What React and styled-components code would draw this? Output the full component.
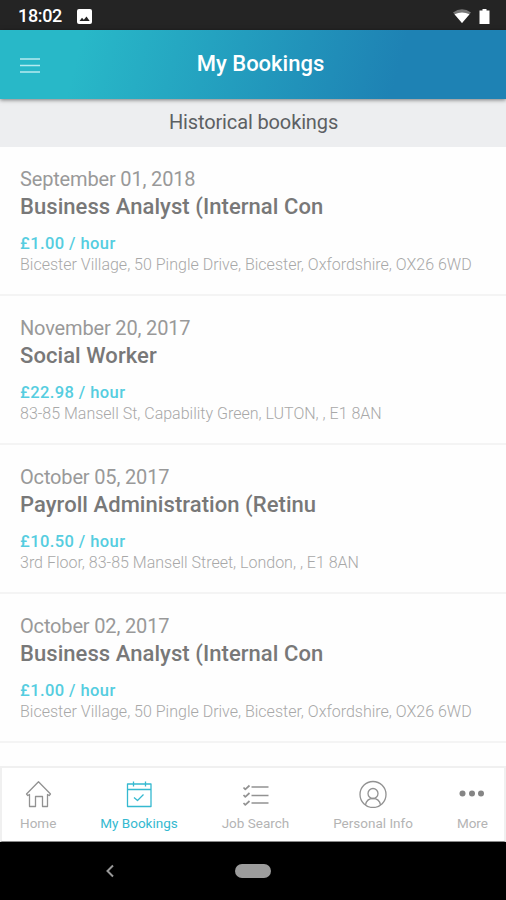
import React, { useState } from "react"
import styled, { createGlobalStyle } from "styled-components"

const GlobalStyle = createGlobalStyle`
	* {
		box-sizing: border-box;
	}
	body {
		margin: 0;
		background: #fff;
		font-family: Roboto, "Liberation Sans", sans-serif;
	}
`

const Screen = styled.div`
	display: flex;
	flex-direction: column;
	width: 100%;
	height: 900px;
	overflow: hidden;
	background: #fefefe;
`

const StatusBar = styled.div`
	display: flex;
	align-items: center;
	flex: none;
	height: 30px;
	padding: 2px 16px 0 18px;
	background: #242424;
	color: #fff;
`
const Clock = styled.span`
	flex: 1;
	display: flex;
	align-items: center;
	gap: 15px;
	font-size: 18px;
	font-weight: 500;
	line-height: 28px;
	letter-spacing: -0.35px;
`
const StatusIcons = styled.div`
	display: flex;
	align-items: center;
	gap: 7px;
`

const Header = styled.header`
	display: grid;
	grid-template-columns: 60px 1fr 40px;
	align-items: center;
	flex: none;
	height: 69px;
	padding-right: 5px;
	background: linear-gradient(105deg, #28b8c8 16%, #1e82b4 78%);
	box-shadow: 0 1px 4px rgba(0, 0, 0, 0.5);
	z-index: 1;
`
const MenuButton = styled.button`
	height: 69px;
	padding: 0 0 0 20px;
	border: 0;
	background: none;
	text-align: left;
	line-height: 0;
`
const Title = styled.h1`
	margin: 0;
	padding-bottom: 2px;
	color: #fff;
	font-size: 22px;
	font-weight: 500;
	line-height: 30px;
	text-align: center;
`

const SectionTitle = styled.h2`
	flex: none;
	height: 48px;
	margin: 0;
	padding: 8px 0 0 1px;
	background: #edeef0;
	color: #5c6063;
	font-size: 20px;
	font-weight: 400;
	line-height: 30px;
	letter-spacing: -0.13px;
	text-align: center;
`

const List = styled.ul`
	flex: 1;
	min-height: 0;
	margin: 0;
	padding: 0;
	list-style: none;
	overflow: hidden;
`
const Booking = styled.li`
	height: 149px;
	padding: 18px 20px 0;
	border-bottom: 2px solid #f4f4f4;
	white-space: nowrap;
`
const BookingDate = styled.div`
	color: #999;
	font-size: 20px;
	line-height: 28px;
	letter-spacing: -0.16px;
`
const Role = styled.div`
	color: #787878;
	font-size: 22px;
	font-weight: 500;
	line-height: 28px;
	letter-spacing: 0.06px;
`
const Rate = styled.div`
	margin-top: 12px;
	color: #55cde0;
	font-size: 16.5px;
	font-weight: 500;
	line-height: 21px;
	letter-spacing: 0.42px;
`
const Address = styled.div`
	color: #a8a8a8;
	font-size: 16px;
	font-weight: 300;
	line-height: 22px;
`

const TabBar = styled.nav`
	display: flex;
	justify-content: space-between;
	flex: none;
	height: 76px;
	padding: 0 16px 0 18px;
	border: 2px solid #f0f0f0;
	border-bottom: 1px solid #8a8a8a;
	background: #fff;
`
const Tab = styled.button`
	display: flex;
	flex-direction: column;
	align-items: center;
	padding: 12px 0 0;
	border: 0;
	background: none;
	color: ${p => (p.$active ? "#35b9d0" : "#929292")};
	font-family: inherit;
`
const TabLabel = styled.span`
	margin-top: 5px;
	color: ${p => (p.$active ? "#35b9d0" : "#b4b4b4")};
	font-size: 13.5px;
	line-height: 20px;
	white-space: nowrap;
`

const SystemBar = styled.div`
	display: grid;
	grid-template-columns: 1fr auto 1fr;
	align-items: center;
	flex: none;
	height: 58px;
	background: #000;
`
const BackButton = styled.button`
	justify-self: start;
	padding: 0;
	margin-left: 105px;
	border: 0;
	background: none;
	line-height: 0;
`
const HomePill = styled.div`
	width: 36px;
	height: 14px;
	border-radius: 7px;
	background: #9c9c9c;
`

const Icon = ({ children, stroke = 1.3, ...props }) => (
	<svg
		width="28"
		height="28"
		viewBox="0 0 28 28"
		fill="none"
		stroke="currentColor"
		strokeWidth={stroke}
		strokeLinejoin="round"
		{...props}
	>
		{children}
	</svg>
)

const HomeIcon = () => (
	<Icon>
		<path d="M2.500 14 14.500 1.800l12 12.200-1.300 1.500-1.700-1v12h-5V16.500h-7v10h-6V14.500l-1.700 1z" />
	</Icon>
)
const CalendarIcon = () => (
	<Icon>
		<path d="M2.500 4H26v22.500H2.500zM2.500 9.500H26M8.500 1.500v5M20.500 1.500v5M9 17.500l3.500 3 6-6" />
	</Icon>
)
const ChecklistIcon = () => (
	<Icon>
		<path d="M10.500 7h17M10.500 15.500h17M10.500 23h17" />
		<path
			strokeWidth="1.700"
			d="M2.500 7.500 4.300 9.300 8.500 5.500M2.500 15 4.300 16.800 8.500 13M2.500 23 4.300 24.800 8.500 21"
		/>
	</Icon>
)
const PersonIcon = () => (
	<Icon>
		<circle cx="14" cy="14.500" r="13" />
		<circle cx="14" cy="13.500" r="5" />
		<path d="M6.500 25c.7-4 3.500-6.500 7.500-6.500s6.800 2.500 7.500 6.500" />
	</Icon>
)
const MoreIcon = () => (
	<Icon fill="#858585" stroke="0">
		<circle cx="4.500" cy="13.500" r="3" />
		<circle cx="14" cy="13.500" r="3" />
		<circle cx="23" cy="13.500" r="3" />
	</Icon>
)

const bookings = [
	{
		date: "September 01, 2018",
		role: "Business Analyst (Internal Con",
		rate: "£1.00 / hour",
		address: "Bicester Village, 50 Pingle Drive, Bicester, Oxfordshire, OX26 6WD"
	},
	{
		date: "November 20, 2017",
		role: "Social Worker",
		rate: "£22.98 / hour",
		address: "83-85 Mansell St, Capability Green, LUTON, , E1 8AN"
	},
	{
		date: "October 05, 2017",
		role: "Payroll Administration (Retinu",
		rate: "£10.50 / hour",
		address: "3rd Floor, 83-85 Mansell Street, London, , E1 8AN"
	},
	{
		date: "October 02, 2017",
		role: "Business Analyst (Internal Con",
		rate: "£1.00 / hour",
		address: "Bicester Village, 50 Pingle Drive, Bicester, Oxfordshire, OX26 6WD"
	}
]

const tabs = [
	{ label: "Home", icon: HomeIcon },
	{ label: "My Bookings", icon: CalendarIcon },
	{ label: "Job Search", icon: ChecklistIcon },
	{ label: "Personal Info", icon: PersonIcon },
	{ label: "More", icon: MoreIcon }
]

export default function App() {
	const [active, setActive] = useState("My Bookings")

	return (
		<Screen>
			<GlobalStyle />
			<StatusBar>
				<Clock>
					18:02
					<svg width="15" height="15" viewBox="0 0 15 15">
						<rect width="15" height="15" rx="2" fill="#fff" />
						<path d="M2.500 12 5 8.700l1.800 2.100L9.500 7.500l3.200 4.500z" fill="#242424" />
					</svg>
				</Clock>
				<StatusIcons>
					<svg width="20" height="15" viewBox="0 0 20 15">
						<path d="M1 3.500Q10-3 19 3.500L10 14z" fill="#777" />
						<path d="M2.500 5.300Q10 1.500 17.500 5.300L10 14z" fill="#fff" />
					</svg>
					<svg width="11" height="15" viewBox="0 0 11 15">
						<path d="M3.500 0h4v1.500H10.500V15H0.500V1.500h3z" fill="#fff" />
					</svg>
				</StatusIcons>
			</StatusBar>

			<Header>
				<MenuButton aria-label="Menu">
					<svg width="20" height="16" viewBox="0 0 20 16">
						<path
							d="M0 2h20M0 8.500h20M0 15h20"
							stroke="#b5eaf0"
							strokeWidth="1.700"
						/>
					</svg>
				</MenuButton>
				<Title>My Bookings</Title>
			</Header>

			<SectionTitle>Historical bookings</SectionTitle>

			<List>
				{bookings.map(b => (
					<Booking key={b.date}>
						<BookingDate>{b.date}</BookingDate>
						<Role>{b.role}</Role>
						<Rate>{b.rate}</Rate>
						<Address>{b.address}</Address>
					</Booking>
				))}
			</List>

			<TabBar>
				{tabs.map(({ label, icon: TabIcon }) => (
					<Tab
						key={label}
						$active={label == active}
						onClick={() => setActive(label)}
					>
						<TabIcon />
						<TabLabel $active={label == active}>{label}</TabLabel>
					</Tab>
				))}
			</TabBar>

			<SystemBar>
				<BackButton aria-label="Back">
					<svg width="10" height="14" viewBox="0 0 10 14">
						<path d="M8 1.500 2.500 7 8 12.500" fill="none" stroke="#999" strokeWidth="2" />
					</svg>
				</BackButton>
				<HomePill />
			</SystemBar>
		</Screen>
	)
}
